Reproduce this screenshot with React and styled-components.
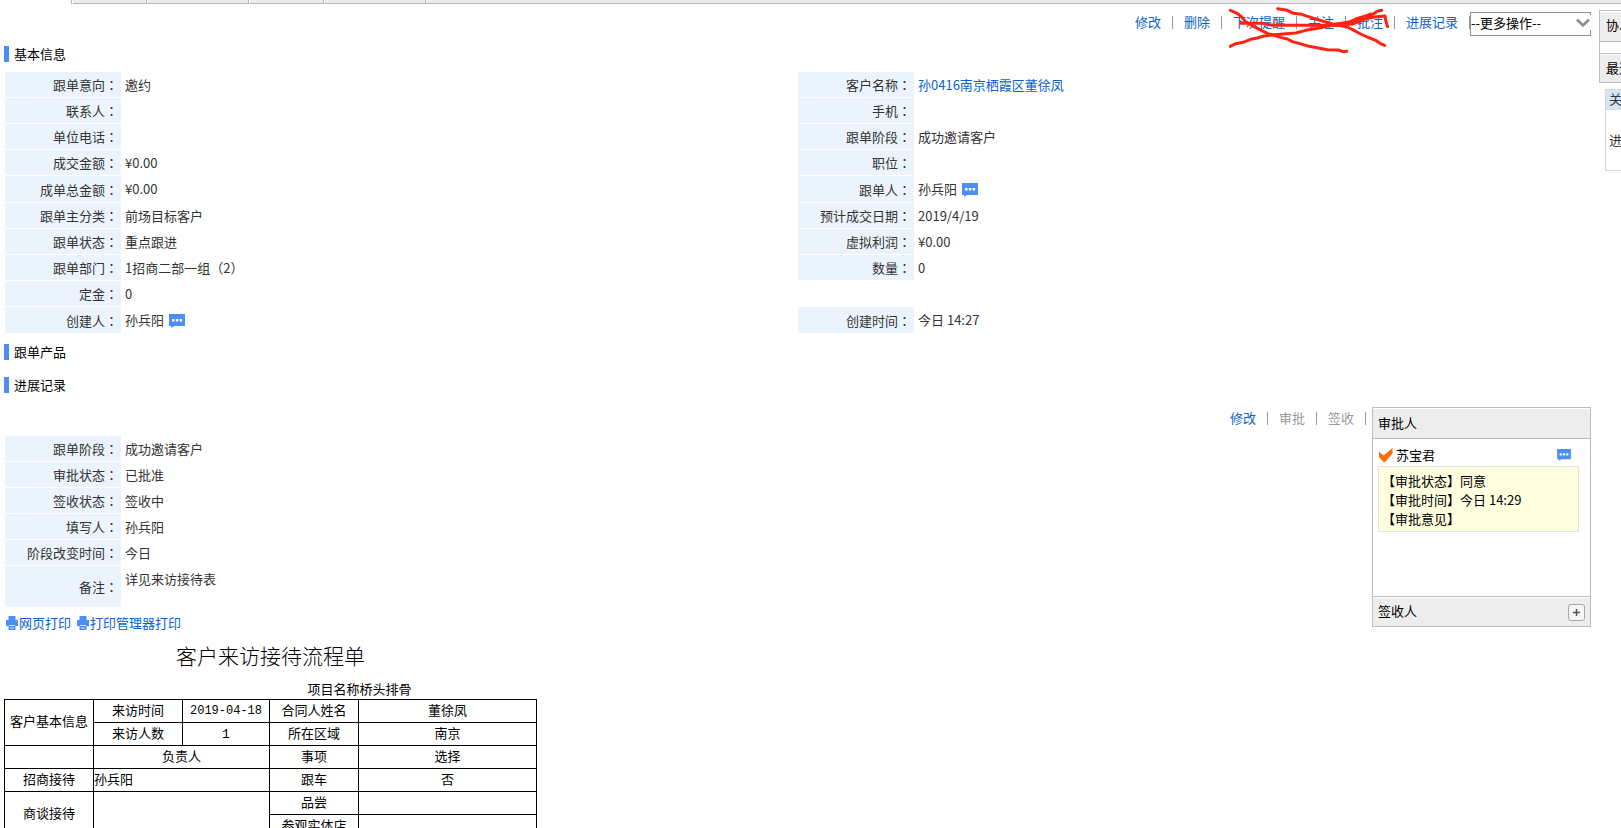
import React from "react";
import styled, { createGlobalStyle } from "styled-components";

const GlobalStyle = createGlobalStyle`
  * { box-sizing: border-box; }
  html, body { margin: 0; height: 100%; overflow: hidden; background: #fff; }
  body {
    font-family: "Noto Sans CJK SC", sans-serif;
    font-size: 13px;
    line-height: 19px;
    color: #333;
  }
  button, select { font: inherit; color: inherit; }
  a { text-decoration: none; }
`;

/* ---------- tab strip ---------- */

const TabStrip = styled.nav`
  display: flex;
  gap: 1px;
  height: 4px;
  padding-left: 71px;
`;

const StripEdge = styled.span`
  width: 1px;
  background: #b8b8b8;
`;

const Tab = styled.span`
  width: ${(p) => (p.$wide ? 101 : 74)}px;
  background: #ededed;
  border-right: 1px solid #b8b8b8;
  border-bottom: 1px solid #b8b8b8;
`;

const StripRest = styled.span`
  flex: 1;
  margin-left: -1px;
  background: #ededed;
  border-bottom: 1px solid #b8b8b8;
`;

/* ---------- page ---------- */

const Page = styled.div`
  display: grid;
  grid-template-columns: minmax(0, 1fr) 22px;
  column-gap: 8px;
`;

const Main = styled.main`
  padding: 7px 0 0 4px;
`;

const Toolbar = styled.div`
  display: flex;
  justify-content: flex-end;
  align-items: flex-start;
  height: 25px;
`;

const Actions = styled.div`
  position: relative;
  display: flex;
  align-items: center;
  height: 20px;
`;

const Link = styled.a`
  color: #0a62c9;
`;

const MutedAction = styled.button`
  padding: 0;
  border: 0;
  background: none;
  color: #999;
`;

const Bar = styled.span`
  width: 1px;
  height: 13px;
  margin: 2px ${(p) => p.$end || 11}px 0 11px;
  background: #999;
`;

const Scribble = styled.svg`
  position: absolute;
  left: -14px;
  top: -11px;
  pointer-events: none;
`;

const SelectBox = styled.label`
  position: relative;
  width: 121px;
  height: 24px;
  margin-top: 1px;
`;

const Select = styled.select`
  width: 100%;
  height: 24px;
  padding: 0 0 4px;
  appearance: none;
  border: 1px solid #8f8f8f;
  border-radius: 0;
  background: #fff;
  color: #000;
`;

const SelectArrow = styled.svg`
  position: absolute;
  right: 0;
  top: 3px;
  background: #fff;
  pointer-events: none;
`;

const SectionTitle = styled.h2`
  display: flex;
  align-items: center;
  height: 16px;
  margin: ${(p) => p.$top}px 0 0;
  padding: 0 0 2px 5px;
  border-left: 5px solid #4d8df6;
  font-size: 13px;
  font-weight: 400;
  color: #000;
`;

const InfoColumns = styled.div`
  display: grid;
  grid-template-columns: 1fr 1fr;
  margin: 10px 0 0 1px;
`;

const FieldList = styled.dl`
  display: flex;
  flex-direction: column;
  gap: 1px;
  margin: 0;
`;

const Field = styled.div`
  display: flex;
  gap: 4px;
  height: ${(p) => p.$height || 25}px;
`;

const FieldName = styled.dt`
  display: flex;
  align-items: center;
  justify-content: flex-end;
  width: 116px;
  padding-right: 3px;
  background: #ebf3fc;
`;

const FieldValue = styled.dd`
  display: flex;
  gap: 5px;
  margin: 0;
  padding-top: 3px;
`;

const Colon = styled.span`
  font-family: "Noto Sans CJK TC", "Noto Sans CJK JP", sans-serif;
`;

const IconButton = styled.button`
  display: flex;
  align-items: center;
  height: 22px;
  padding: 0;
  border: 0;
  background: none;
`;

/* ---------- progress record ---------- */

const Progress = styled.section`
  display: flex;
  justify-content: space-between;
  align-items: flex-start;
  height: 200px;
  margin-top: 14px;
  padding-left: 1px;
`;

const ProgressFields = styled.div`
  padding-top: 29px;
`;

const ProgressSide = styled.div`
  display: flex;
  align-items: flex-start;
`;

const ApprovalPanel = styled.section`
  width: 219px;
  border: 1px solid #bdbdbd;
  background: #fff;
  color: #000;
`;

const PanelHead = styled.header`
  display: flex;
  align-items: center;
  justify-content: space-between;
  height: ${(p) => p.$height}px;
  padding: 0 5px 2px;
  background: #ededed;
  box-shadow: inset 0 1px #fff;
  border-bottom: ${(p) => (p.$line ? "1px solid #bdbdbd" : "0")};
`;

const PanelBody = styled.div`
  height: 158px;
  padding: 6px 11px 0 5px;
  border-bottom: 1px solid #bdbdbd;
`;

const Approver = styled.div`
  display: flex;
  align-items: center;
  gap: 3px;
  height: 21px;
  padding: 0 8px 2px 1px;

  button { margin-left: auto; }
`;

const ApprovalNote = styled.div`
  height: 66px;
  padding: 4px 3px 0;
  border: 1px solid #e3e3e3;
  background: #ffffe0;
`;

const AddButton = styled.button`
  display: flex;
  align-items: center;
  justify-content: center;
  width: 17px;
  height: 17px;
  margin-top: 3px;
  padding: 0;
  border: 1px solid #a8a8a8;
  border-radius: 3px;
  background: #f6f6f6;
`;

const PrintLinks = styled.div`
  display: flex;
  gap: 6px;
  margin-top: 6px;
  padding-left: 2px;
`;

const PrintLink = styled(Link)`
  display: flex;
  align-items: center;
  gap: 1px;
`;

const Sheet = styled.table`
  width: 533px;
  border-collapse: collapse;
  table-layout: fixed;
  font-family: "Liberation Mono", "Noto Sans CJK SC", monospace;
  color: #000;

  td, th {
    height: 23px;
    padding: 0;
    border: 1px solid #000;
    font-weight: 400;
    line-height: 19px;
    text-align: center;
  }
`;

const SheetTitle = styled.caption`
  padding: 14px 0 10px;
  font-size: 21px;
  font-weight: 300;
  line-height: 26px;
`;

const SheetNote = styled.tr`
  && td { height: 17px; border-width: 0 0 1px; line-height: 17px; }
`;

const DateText = styled.time`
  font-size: 12px;
`;

const LeftCell = styled.td`
  && { text-align: left; }
`;

/* ---------- clipped side column ---------- */

const Side = styled.aside`
  padding-top: 6px;
  overflow: hidden;
  white-space: nowrap;
`;

const SideMenu = styled.div`
  width: 200px;
  border: 1px solid #bdbdbd;
  color: #000;
`;

const SideItem = styled.div`
  height: ${(p) => p.$height}px;
  padding: 4px 6px;
  background: #ededed;
  box-shadow: inset 0 1px #fff;
`;

const SideGap = styled.div`
  height: 13px;
  border: solid #bdbdbd;
  border-width: 1px 0;
`;

const SideCard = styled.div`
  width: 200px;
  height: 82px;
  margin: 6px 0 0 6px;
  border: 1px solid #d5d8dc;
`;

const SideCardTitle = styled.div`
  height: 20px;
  padding-left: 3px;
  border-bottom: 1px solid #d5d8dc;
  background: #d6e3f3;
  line-height: 18px;
`;

const SideCardText = styled.div`
  padding: 20px 3px;
`;

/* ---------- icons ---------- */

const ChatIcon = ({ small }) => (
  <svg width={small ? 14 : 16} height={small ? 12 : 14} viewBox="0 0 16 14" aria-hidden="true">
    <path d="M0 0h16v12H5l-3 2v-2H0z" fill="#4d8df6" />
    <path d="M3 5h2.5v2.5H3zM6.8 5h2.5v2.5H6.8zM10.6 5h2.5v2.5h-2.5z" fill="#fff" />
  </svg>
);

const CheckIcon = () => (
  <svg width="14" height="14" viewBox="0 0 14 14" aria-hidden="true">
    <path d="M0 3.500 4.500 7.500 13.500 0v5.500L6 14H4.500L0 9z" fill="#ff6b08" />
  </svg>
);

const PrintIcon = () => (
  <svg width="12" height="14" viewBox="0 0 12 14" aria-hidden="true">
    <path d="M2.500 0h7v4H12v6H9.500v4h-7v-4H0V4h2.500z" fill="#4d8df6" />
    <path d="M3 9h6v1H3zM4 11.500h4v1H4z" fill="#cfe0ff" />
  </svg>
);

const ScribbleMarks = () => (
  <Scribble width="180" height="60" viewBox="0 0 540 180" aria-hidden="true">
    <g fill="none" stroke="#ff2412" strokeWidth="9" strokeLinecap="round" strokeLinejoin="round">
      <path d="M34 31 56 41 68 51 79 65 105 80 145 100 165 106 185 112 205 117 220 125 240 130 270 139 310 146 325 149 358 150 372 155 383 154" />
      <path d="M34 139 50 131 72 127 95 118 115 114 135 108 165 104 230 99 260 91 300 84 335 76 390 66 415 55 440 48 463 42 475 34 488 31" />
      <path d="M176 26 205 31 223 40 248 43 275 52 300 60 345 73 385 81 405 91 425 102 445 111 470 121 483 130 497 136" />
      <path d="M65 70H130L160 76H350L400 72 420 65 438 57 460 52 498 48 501 65 506 80" />
      <path d="M345 74 395 69 425 58 455 44" strokeWidth="12" />
    </g>
  </Scribble>
);

/* ---------- data ---------- */

const leftFields = [
  { name: "跟单意向", value: "邀约" },
  { name: "联系人" },
  { name: "单位电话" },
  { name: "成交金额", value: "¥0.00" },
  { name: "成单总金额", value: "¥0.00", height: 26 },
  { name: "跟单主分类", value: "前场目标客户" },
  { name: "跟单状态", value: "重点跟进" },
  { name: "跟单部门", value: <span>1招商二部一组<Colon>（</Colon>2<Colon>）</Colon></span> },
  { name: "定金", value: "0" },
  { name: "创建人", value: "孙兵阳", chat: true, height: 26 },
];

const rightFields = [
  { name: "客户名称", value: <Link href="#customer">孙0416南京栖霞区董徐凤</Link> },
  { name: "手机" },
  { name: "跟单阶段", value: "成功邀请客户" },
  { name: "职位" },
  { name: "跟单人", value: "孙兵阳", chat: true, height: 26 },
  { name: "预计成交日期", value: "2019/4/19" },
  { name: "虚拟利润", value: "¥0.00" },
  { name: "数量", value: "0" },
  { blank: true },
  { name: "创建时间", value: "今日 14:27", height: 26 },
];

const progressFields = [
  { name: "跟单阶段", value: "成功邀请客户" },
  { name: "审批状态", value: "已批准" },
  { name: "签收状态", value: "签收中" },
  { name: "填写人", value: "孙兵阳" },
  { name: "阶段改变时间", value: "今日" },
  { name: "备注", value: "详见来访接待表", height: 41 },
];

const Fields = ({ items }) => (
  <FieldList>
    {items.map((f, i) => (
      <Field key={i} $height={f.height}>
        {!f.blank && (
          <>
            <FieldName>{f.name}<Colon>：</Colon></FieldName>
            <FieldValue>
              {f.value}
              {f.chat && <IconButton aria-label="发消息"><ChatIcon /></IconButton>}
            </FieldValue>
          </>
        )}
      </Field>
    ))}
  </FieldList>
);

export default function App() {
  return (
    <>
      <GlobalStyle />
      <TabStrip>
        <StripEdge />
        <Tab />
        <Tab $wide />
        <Tab />
        <Tab $wide />
        <StripRest />
      </TabStrip>
      <Page>
        <Main>
          <Toolbar>
            <Actions>
              <Link href="#edit">修改</Link><Bar />
              <Link href="#delete">删除</Link><Bar />
              <Actions>
                <Link href="#remind">下次提醒</Link><Bar />
                <Link href="#follow">关注</Link><Bar />
                <Link href="#comment">批注</Link>
                <ScribbleMarks />
              </Actions>
              <Bar />
              <Link href="#progress">进展记录</Link><Bar $end="0" />
            </Actions>
            <SelectBox>
              <Select aria-label="更多操作"><option>--更多操作--</option></Select>
              <SelectArrow width="16" height="15" viewBox="0 0 16 15" aria-hidden="true">
                <path d="M2 4.500 8 10.500 14 4.500" fill="none" stroke="#8f8b88" strokeWidth="2.500" />
              </SelectArrow>
            </SelectBox>
          </Toolbar>

          <SectionTitle $top={10}>基本信息</SectionTitle>
          <InfoColumns>
            <Fields items={leftFields} />
            <Fields items={rightFields} />
          </InfoColumns>
          <SectionTitle $top={11}>跟单产品</SectionTitle>
          <SectionTitle $top={17}>进展记录</SectionTitle>

          <Progress>
            <ProgressFields><Fields items={progressFields} /></ProgressFields>
            <ProgressSide>
              <Actions>
                <Link href="#edit-progress">修改</Link><Bar />
                <MutedAction>审批</MutedAction><Bar />
                <MutedAction>签收</MutedAction><Bar $end="6" />
              </Actions>
              <ApprovalPanel>
                <PanelHead $height={31} $line>审批人</PanelHead>
                <PanelBody>
                  <Approver>
                    <CheckIcon />苏宝君
                    <IconButton aria-label="发消息"><ChatIcon small /></IconButton>
                  </Approver>
                  <ApprovalNote>
                    <div>【审批状态】同意</div>
                    <div>【审批时间】今日 14:29</div>
                    <div>【审批意见】</div>
                  </ApprovalNote>
                </PanelBody>
                <PanelHead $height={29}>
                  签收人
                  <AddButton aria-label="添加签收人">
                    <svg width="9" height="9" viewBox="0 0 9 9" aria-hidden="true">
                      <path d="M4.500 1v7M1 4.500h7" stroke="#555" strokeWidth="1.500" />
                    </svg>
                  </AddButton>
                </PanelHead>
              </ApprovalPanel>
            </ProgressSide>
          </Progress>

          <PrintLinks>
            <PrintLink href="#print"><PrintIcon />网页打印</PrintLink>
            <PrintLink href="#print-manager"><PrintIcon />打印管理器打印</PrintLink>
          </PrintLinks>

          <Sheet>
            <SheetTitle>客户来访接待流程单</SheetTitle>
            <colgroup>
              <col width="89" /><col width="89" /><col width="87" /><col width="89" /><col width="178" />
            </colgroup>
            <tbody>
              <SheetNote><td colSpan={2} /><td colSpan={3}>项目名称桥头排骨</td></SheetNote>
              <tr>
                <th rowSpan={2}>客户基本信息</th><td>来访时间</td>
                <td><DateText>2019-04-18</DateText></td><td>合同人姓名</td><td>董徐凤</td>
              </tr>
              <tr><td>来访人数</td><td>1</td><td>所在区域</td><td>南京</td></tr>
              <tr><th /><td colSpan={2}>负责人</td><td>事项</td><td>选择</td></tr>
              <tr><th>招商接待</th><LeftCell colSpan={2}>孙兵阳</LeftCell><td>跟车</td><td>否</td></tr>
              <tr><th rowSpan={2}>商谈接待</th><td colSpan={2} rowSpan={2} /><td>品尝</td><td /></tr>
              <tr><td>参观实体店</td><td /></tr>
            </tbody>
          </Sheet>
        </Main>
        <Side>
          <SideMenu>
            <SideItem $height={30}>协...</SideItem>
            <SideGap />
            <SideItem $height={28}>最近</SideItem>
          </SideMenu>
          <SideCard>
            <SideCardTitle>关注</SideCardTitle>
            <SideCardText>进展</SideCardText>
          </SideCard>
        </Side>
      </Page>
    </>
  );
}
